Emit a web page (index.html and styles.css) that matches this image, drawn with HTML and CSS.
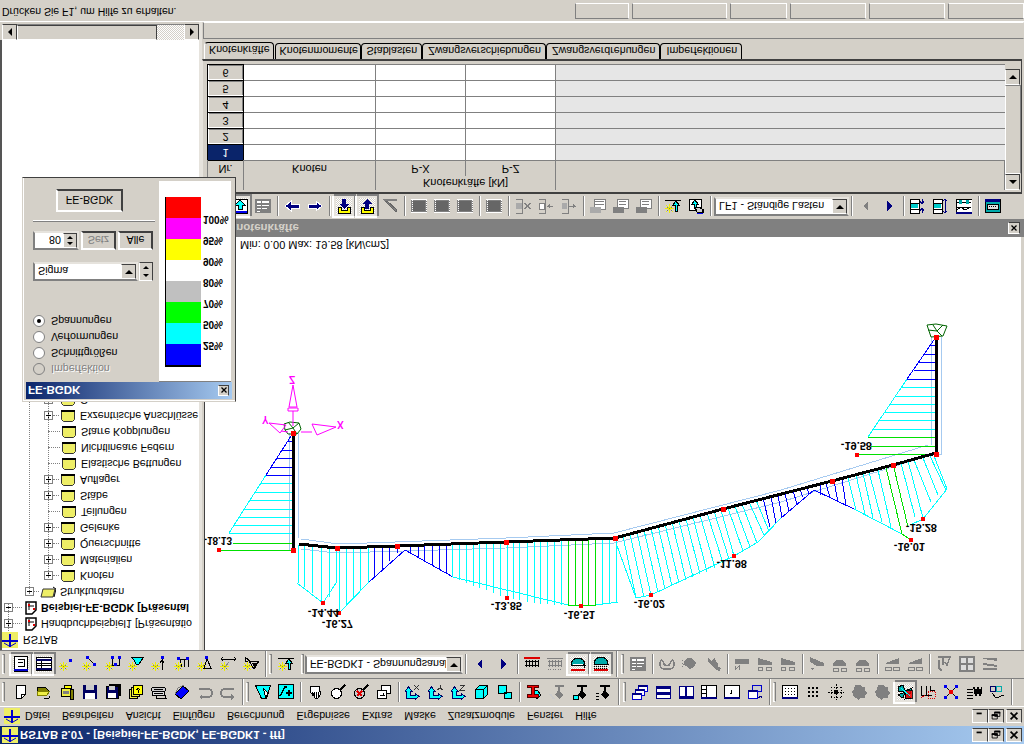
FILE: index.html
```html
<!DOCTYPE html>
<html lang="de">
<head>
    <meta charset="UTF-8">
    <title>RSTAB 5.07</title>
    <link rel="stylesheet" href="styles.css">
</head>
<body>
<svg class="defs">
    <symbol id="logo" viewBox="0 0 16 16"><path d="M0 0h16v16H0z" fill="#eeee66"/><path d="M0 8h16v2H0zM7 2h2v13H7z" fill="#00c"/><path d="M2 11l5 3M14 11l-5 3" stroke="#00c" fill="none"/></symbol>
    <symbol id="folder" viewBox="0 0 16 16"><path d="M1.500 2.500h13v9l-2 2h-9l-2-2z" fill="#eeee66" stroke="#333"/><path d="M1 3h14" stroke="#000" stroke-width="2"/></symbol>
    <symbol id="folderopen" viewBox="0 0 16 16"><path d="M3 5h12l-2 8H1z" fill="#eeee66" stroke="#333"/><path d="M13 3l3 2-2 8" fill="none" stroke="#000"/></symbol>
    <symbol id="project" viewBox="0 0 16 16"><path d="M3 2h10v8l-4 4H3z" fill="#fff" stroke="#000" stroke-width="1.5"/><path d="M5 6h6M6 3v7" stroke="#000"/><path d="M5 4h2v2H5zM10 8h2v2h-2z" fill="#d00"/></symbol>
    <symbol id="new" viewBox="0 0 16 16"><path d="M3.5 1.5h9v9l-4 4h-5z" fill="#fff" stroke="#000"/><path d="M8.5 14v-3.5h4" fill="none" stroke="#000"/></symbol>
    <symbol id="open" viewBox="0 0 16 16"><path d="M1.5 3.5h8l4 4h-12z" fill="#808000" stroke="#000"/><path d="M1.5 7.5h12l-3 4h-9z" fill="#eeee44" stroke="#808000"/><path d="M8 14h5l1-2" fill="none" stroke="#000"/></symbol>
    <symbol id="props" viewBox="0 0 16 16"><path d="M5.5 1.5h7v3h-7z" fill="#ff0" stroke="#000"/><path d="M2.5 4.5h9v8h-9z" fill="#eeee44" stroke="#000"/><path d="M4 7h6v3H4z" fill="#808080"/><path d="M11.5 5.5h3v10h-3z" fill="#808000" stroke="#000"/></symbol>
    <symbol id="save" viewBox="0 0 16 16"><path d="M1 1h14v14H1z" fill="#000060"/><path d="M4 1h8v5H4z" fill="#ccc"/><path d="M3 9h10v6H3z" fill="#fff"/></symbol>
    <symbol id="saveall" viewBox="0 0 16 16"><path d="M4 0h12v12H4z" fill="#000"/><path d="M1 2h12v12H1z" fill="#000060" stroke="#000"/><path d="M4 2h6v4H4z" fill="#ccc"/><path d="M3 9h8v5H3z" fill="#fff"/></symbol>
    <symbol id="stackup" viewBox="0 0 16 16"><path d="M1.5 5.5h8v9h-8z" fill="#eeee44" stroke="#000"/><path d="M3.5 3.5h8v9h-8z" fill="#eeee44" stroke="#000"/><path d="M5.5 1.5h9v9h-9z" fill="#ff0" stroke="#000"/><path d="M10 3l-2 3h4zM9.500 5h1v4h-1z" fill="#000"/></symbol>
    <symbol id="print" viewBox="0 0 16 16"><path d="M2.500 3.500h10a2 2 0 0 1 0 4h-10a2 2 0 0 1 0-4z" fill="#ccc" stroke="#000"/><path d="M1.500 7.500h12v4h-12z" fill="#ddd" stroke="#000"/><path d="M5 11.500h9l1 3H6zM3 5.500h9M3 9.500h9" fill="none" stroke="#000"/></symbol>
    <symbol id="book" viewBox="0 0 16 16"><path d="M1 10l8-8 6 5-8 8z" fill="#00f" stroke="#000"/><path d="M1 10l3-6 6-3" fill="none" stroke="#808080"/></symbol>
    <symbol id="undo" viewBox="0 0 16 16"><path d="M2 5h9a3.500 3.500 0 0 1 0 8H5" fill="none" stroke="#808080" stroke-width="2"/><path d="M2 13l3-3v6z" fill="#808080"/></symbol>
    <symbol id="redo" viewBox="0 0 16 16"><path d="M14 5H5a3.500 3.500 0 0 0 0 8h6" fill="none" stroke="#808080" stroke-width="2"/><path d="M14 13l-3-3v6z" fill="#808080"/></symbol>
    <symbol id="view1" viewBox="0 0 16 16"><path d="M.5 1.500h15l-4 13h-5z" fill="#0ff" stroke="#000"/><path d="M8 4l5 5-2 5z" fill="#fff" stroke="#000"/></symbol>
    <symbol id="view2" viewBox="0 0 16 16"><path d="M.5.500h15v14H.500z" fill="#0ff" stroke="#000"/><path d="M2 12l5-9h2M8 9h6M11 6v6" fill="none" stroke="#000" stroke-width="1.500"/></symbol>
    <symbol id="hand" viewBox="0 0 16 16"><path d="M3 2h9v5h1v4l-2 3H8L6 9H4L3 6z" fill="#fff" stroke="#000"/><path d="M5.500 8v4M7.500 8v6M9.500 8v6M11.500 8v5" stroke="#000"/></symbol>
    <symbol id="mag" viewBox="0 0 16 16"><circle cx="6.500" cy="9.500" r="5" fill="#fff" stroke="#000"/><path d="M10 6l5-5" stroke="#000" stroke-width="2"/></symbol>
    <symbol id="magx" viewBox="0 0 16 16"><circle cx="6.500" cy="9.500" r="5" fill="#ccc" stroke="#000"/><path d="M10 6l5-5" stroke="#000" stroke-width="2"/><path d="M4 7l5 5M9 7l-5 5" stroke="#d00" stroke-width="1.500"/></symbol>
    <symbol id="restore" viewBox="0 0 16 16"><path d="M5.500 1.500h9v8h-9z" fill="#fff" stroke="#000"/><path d="M1.500 6.500h9v8h-9z" fill="#fff" stroke="#000"/><path d="M4 11h4l-1-2" fill="none" stroke="#000"/></symbol>
    <symbol id="axx" viewBox="0 0 16 16"><path d="M1.500 14.500V7H0l3.500-4L7 7H5.500v4H10V9l4 3.500-4 3v-1z" fill="#0ff" stroke="#006"/><path d="M9 1l5 5M14 1L9 6" stroke="#333" fill="none"/></symbol>
    <symbol id="axy" viewBox="0 0 16 16"><path d="M1.500 14.500V7H0l3.500-4L7 7H5.500v4H10V9l4 3.500-4 3v-1z" fill="#0ff" stroke="#006"/><path d="M9 6l3-2 3 2M12 4V1" stroke="#333" fill="none"/></symbol>
    <symbol id="axz" viewBox="0 0 16 16"><path d="M1.500 14.500V7H0l3.500-4L7 7H5.500v4H10V9l4 3.500-4 3v-1z" fill="#0ff" stroke="#006"/><path d="M9 1h5L9 6h5" stroke="#333" fill="none"/></symbol>
    <symbol id="cube" viewBox="0 0 16 16"><path d="M1.500 5.500l4-4h8v9l-4 4h-8z" fill="#0ff" stroke="#000"/><path d="M1.500 5.500h8v9M9.500 5.500l4-4" fill="none" stroke="#000"/></symbol>
    <symbol id="cubes" viewBox="0 0 16 16"><path d="M1.500 1.500h8v8h-8zM7.500 8.500h7v6h-7z" fill="#0ff" stroke="#000"/></symbol>
    <symbol id="ibeam" viewBox="0 0 16 16"><path d="M5 7l6-1 4 5-4 4z" fill="#0ff" stroke="#000"/><path d="M1 1h11v2H8v7h4v3H1v-3h4V3H1z" fill="#e00" stroke="#500"/></symbol>
    <symbol id="tgrey" viewBox="0 0 16 16"><path d="M6 1h9v2h-4v5l3 3-4 4-4-5 2-2 1-2V3H6z" fill="#808080"/><path d="M1 10l4 5" stroke="#ccc" stroke-width="2"/></symbol>
    <symbol id="tblack" viewBox="0 0 16 16"><path d="M5 1h10v2h-4v5l3 3-4 4-4-5 2-2 1-2V3H5z" fill="#000"/><path d="M1 11h5v4H1z" fill="#0ff" stroke="#000"/></symbol>
    <symbol id="tblack2" viewBox="0 0 16 16"><path d="M5 1h10v2h-4v5l3 3-4 4-4-5 2-2 1-2V3H5z" fill="#000"/><path d="M1 9h3M1 12h3M1 15h3" stroke="#000"/></symbol>
    <symbol id="wcas" viewBox="0 0 16 16"><path d="M6 1h9v6H6z" fill="#fff" stroke="#00c"/><path d="M3 5h9v6H3z" fill="#fff" stroke="#00c"/><path d="M0 9h9v6H0z" fill="#fff" stroke="#00c"/><path d="M6 1h9v2H6zM3 5h9v2H3zM0 9h9v2H0z" fill="#000080"/></symbol>
    <symbol id="wh" viewBox="0 0 16 16"><path d="M1 2h14v12H1z" fill="#fff" stroke="#000080"/><path d="M1 2h14v3H1zM1 8h14v3H1z" fill="#000080"/></symbol>
    <symbol id="wv" viewBox="0 0 16 16"><path d="M1 2h14v12H1z" fill="#fff" stroke="#000080"/><path d="M8 2v10" stroke="#000080" stroke-width="2"/><path d="M1 12h14v2H1z" fill="#000080"/></symbol>
    <symbol id="wtree" viewBox="0 0 16 16"><path d="M.5 1.500h15v13H.5z" fill="#fff" stroke="#000"/><path d="M5.500 1.500v11M.5 5.500h5M.5 9.500h5" stroke="#000"/><path d="M0 13h16v2H0z" fill="#000080"/></symbol>
    <symbol id="wdlg" viewBox="0 0 16 16"><path d="M.5 1.500h15v13H.5z" fill="#fff" stroke="#000"/><path d="M7.500 6v4M6 9.500h2" stroke="#000"/><path d="M0 13h16v2H0z" fill="#000080"/></symbol>
    <symbol id="warrow" viewBox="0 0 16 16"><path d="M5 1h9v6H5z" fill="#ccc" stroke="#00c"/><path d="M1 6h9v8H1z" fill="#fff" stroke="#00c"/><path d="M1 6h9v2H1z" fill="#000080"/><path d="M11 14l3-2M14 14v-2h-2" stroke="#000080" fill="none"/></symbol>
    <symbol id="griddots" viewBox="0 0 16 16"><path d="M.5 1.500h15v13H.5z" fill="#fff" stroke="#000"/><path d="M0 13h16v2H0z" fill="#000080"/><path d="M3 4h1v1H3zM6 4h1v1H6zM9 4h1v1H9zM12 4h1v1h-1zM3 7h1v1H3zM6 7h1v1H6zM9 7h1v1H9zM12 7h1v1h-1zM3 10h1v1H3zM6 10h1v1H6zM9 10h1v1H9zM12 10h1v1h-1z"/></symbol>
    <symbol id="dots" viewBox="0 0 16 16"><path d="M3 3h2v2H3zM7 3h2v2H7zM11 3h2v2h-2zM3 7h2v2H3zM7 7h2v2H7zM11 7h2v2h-2zM3 11h2v2H3zM7 11h2v2H7zM11 11h2v2h-2z"/></symbol>
    <symbol id="cross" viewBox="0 0 16 16"><path d="M0 8h16M8 0v16" stroke="#000" stroke-dasharray="2 1"/><path d="M3 3v10M13 3v10M3 3h10M3 13h10" stroke="#000" stroke-dasharray="1 2"/><path d="M6 6h4v4H6z"/></symbol>
    <symbol id="gear" viewBox="0 0 16 16"><path d="M4 1h5l2 2h3v4l2 2-2 2v3H9l-2 2-2-2-2-1-1-3-2-2 3-3z" fill="#808080"/></symbol>
    <symbol id="flower" viewBox="0 0 16 16"><path d="M1 3l5-2 2 6-6 1zM8 7l7-3-2 6zM8 8l-2 6-5-3zM9 8l5 6-6 1z" fill="#0aa" stroke="#000"/><path d="M8 6h7v8H8z" fill="#e00" stroke="#000" opacity=".85"/><path d="M4 4l9 8" stroke="#0ff"/></symbol>
    <symbol id="reddots" viewBox="0 0 16 16"><path d="M1 2v9h11M6 2v9M10 2v4h5" fill="none" stroke="#000"/><path d="M1 14l4-3M8 7h7v7H8z" fill="none" stroke="#d00" stroke-dasharray="1 1"/></symbol>
    <symbol id="xblue" viewBox="0 0 16 16"><path d="M2 2l12 12M14 2L2 14" stroke="#000"/><path d="M1 1h3v3H1zM12 1h3v3h-3zM1 12h3v3H1zM12 12h3v3h-3z" fill="#00e"/><path d="M6 6h4v4H6z" fill="#e00"/></symbol>
    <symbol id="chartb" viewBox="0 0 16 16"><path d="M1 5h6M1 8h6M1 11h6M1 14h6" stroke="#000"/><path d="M8 3l2 9 2-9 2 9 2-9" fill="none" stroke="#000" stroke-width="2"/></symbol>
    <symbol id="glasses" viewBox="0 0 16 16"><circle cx="4" cy="5" r="3" fill="none" stroke="#006"/><circle cx="10" cy="5" r="3" fill="none" stroke="#0aa"/><path d="M3 9l4 5 8-3" fill="none" stroke="#000"/></symbol>
    <symbol id="listbox" viewBox="0 0 16 16"><path d="M1.500.5h13v15h-13z" fill="#fff" stroke="#000"/><path d="M5 3h6v7H5M5 6h5M5 10h3" fill="none" stroke="#000"/><path d="M1 13h14v2H1z" fill="#00c"/></symbol>
    <symbol id="tablebox" viewBox="0 0 16 16"><path d="M.5 1.500h15v13H.5z" fill="#fff" stroke="#000"/><path d="M0 3h16v2H0zM0 12h16v2H0z" fill="#000060"/><path d="M1 7h14M1 9.500h14M5.500 5v7" stroke="#000"/></symbol>
    <symbol id="star" viewBox="0 0 16 16"><path d="M1 7l7 7M8 7l-7 7M4.500 6v9M0 10.500h9" stroke="#f0f000" stroke-width="1.400" fill="none"/><path d="M2 9h1v1H2zM6 9h1v1H6zM2 12h1v1H2zM6 12h1v1H6zM4 10h1v1H4z" fill="#777"/></symbol>
    <symbol id="n1" viewBox="0 0 16 16"><use href="#star"/><path d="M10 3h3v3h-3z" fill="#00e"/></symbol>
    <symbol id="n2" viewBox="0 0 16 16"><use href="#star"/><path d="M5 1l8 8" stroke="#000"/><path d="M4 0h3v3H4zM11 7h3v3h-3z" fill="#00e"/></symbol>
    <symbol id="n3" viewBox="0 0 16 16"><use href="#star"/><path d="M7 2v7h7V2" fill="none" stroke="#000"/><path d="M6 0h3v3H6zM13 0h3v3h-3z" fill="#00e"/><path d="M9 7h3v3H9z" fill="#00e"/></symbol>
    <symbol id="n4" viewBox="0 0 16 16"><use href="#star"/><path d="M3 1h13l-3 4-2 3H8L6 4z" fill="#0ff" stroke="#000"/></symbol>
    <symbol id="n5" viewBox="0 0 16 16"><use href="#star"/><path d="M11 3v11M9 7l2-3 2 3" fill="none" stroke="#000"/><path d="M10 0h3v3h-3z" fill="#00e"/></symbol>
    <symbol id="n6" viewBox="0 0 16 16"><use href="#star"/><path d="M5 3h9M6 3v4M10 3v8M14 3v8M7 8v3" fill="none" stroke="#000"/><path d="M3 1h3v3H3zM12 1h3v3h-3z" fill="#00e"/></symbol>
    <symbol id="n7" viewBox="0 0 16 16"><use href="#star"/><path d="M10 3l-3 9h7z" fill="none" stroke="#000"/><path d="M8 0h3v3H8z" fill="#00e"/></symbol>
    <symbol id="n8" viewBox="0 0 16 16"><use href="#star"/><path d="M1 3h15M3 1L1 3l2 2M14 1l2 2-2 2" fill="none" stroke="#000"/><path d="M9 6L5 11" stroke="#888"/></symbol>
    <symbol id="n9" viewBox="0 0 16 16"><use href="#star"/><path d="M2 1v4h3M2 1l6 5M6 5h10l-5 8z" fill="none" stroke="#000"/><path d="M9 7h5l-2 5z"/></symbol>
    <symbol id="starup" viewBox="0 0 16 16"><use href="#star"/><path d="M0 2h16" stroke="#000"/><path d="M11 3l3 4h-2v6h-2V7H8z" fill="#0ff" stroke="#000"/></symbol>
    <symbol id="left" viewBox="0 0 16 16"><path d="M10 3L5 8l5 5z" fill="#000080"/></symbol>
    <symbol id="right" viewBox="0 0 16 16"><path d="M6 3l5 5-5 5z" fill="#000080"/></symbol>
    <symbol id="leftg" viewBox="0 0 16 16"><path d="M10 3L5 8l5 5z" fill="#808080"/></symbol>
    <symbol id="grid1" viewBox="0 0 16 16"><path d="M0 2h16" stroke="#d00" stroke-width="1.500"/><path d="M1 5h14M1 9h14M2 4v7M5 4v7M8 4v7M11 4v7M14 4v7" stroke="#000"/></symbol>
    <symbol id="grid2" viewBox="0 0 16 16"><path d="M0 2h16M1 5h14M1 9h14M2 4v7M5 4v7M8 4v7M11 4v7M14 4v7" stroke="#808080"/><path d="M1 13h3M6 13h3M11 13h3" stroke="#808080" stroke-dasharray="1 1"/></symbol>
    <symbol id="dome1" viewBox="0 0 16 16"><path d="M1 9a7 7 0 0 1 14 0z" fill="#0aa" stroke="#000"/><path d="M3 8h10" stroke="#fff"/><path d="M1 14h14" stroke="#d00" stroke-width="1.500"/><path d="M13 8l2 4" stroke="#000"/></symbol>
    <symbol id="dome2" viewBox="0 0 16 16"><path d="M1 8a7 7 0 0 1 14 0z" fill="#0aa" stroke="#000"/><path d="M1 10h14M1 12h14" stroke="#000" stroke-dasharray="1 1"/><path d="M1 14h14" stroke="#d00" stroke-width="1.500"/></symbol>
    <symbol id="sheet" viewBox="0 0 16 16"><path d="M0 1h16v14H0z" fill="#808080"/><path d="M2 3h4v2H2zM7 3h7v2H7zM2 7h4v1H2zM7 7h7v1H7zM2 10h4v1H2zM7 10h5v1H7zM2 13h3v1H2z" fill="#fff"/></symbol>
    <symbol id="gloop" viewBox="0 0 16 16"><path d="M1 8c0-6 3-4 4 0 1 2 5 2 6 0 1-4 4-6 4 0s-4 5-7 5-7 1-7-5z" fill="none" stroke="#808080" stroke-width="1.500"/></symbol>
    <symbol id="gblob" viewBox="0 0 16 16"><path d="M3 4c3-3 8-2 9 0l2 3-2 4-4 2-4-3-3-1z" fill="#808080"/><path d="M0 4h1M0 7h1M0 10h1" stroke="#808080"/></symbol>
    <symbol id="gman" viewBox="0 0 16 16"><path d="M3 2l3 3 4-4 1 5 2 2v3l3 1-1 3-4-1-3-3-3-3-2-2z" fill="#808080"/></symbol>
    <symbol id="gn" viewBox="0 0 16 16"><path d="M1 3h14v5H1z" fill="#808080"/><path d="M1 10v4l4-4v4" fill="none" stroke="#808080"/></symbol>
    <symbol id="gw1" viewBox="0 0 16 16"><path d="M1 2l14 4v3H1z" fill="#808080"/><path d="M1 11h4v3H1zM9 11h5v3H9z" fill="none" stroke="#808080"/></symbol>
    <symbol id="gw2" viewBox="0 0 16 16"><path d="M1 1l14 6v3H8L1 6z" fill="#808080"/><path d="M3 13h1M2 12h3" stroke="#808080"/></symbol>
    <symbol id="gw3" viewBox="0 0 16 16"><path d="M1 8c2-6 10-6 13 0v2H1z" fill="#808080"/><path d="M1 12h5v3H1zM9 12h5v3H9z" fill="none" stroke="#808080"/></symbol>
    <symbol id="gw4" viewBox="0 0 16 16"><path d="M2 7l13-5v6H2z" fill="#808080"/><path d="M1 11h6v3H1zM9 11h6v3H9z" fill="none" stroke="#808080"/></symbol>
    <symbol id="gt" viewBox="0 0 16 16"><path d="M2 1h13M7 1v8M14 1l-3 8-2-3M3 4v8l3 3" fill="none" stroke="#808080" stroke-width="1.500"/></symbol>
    <symbol id="gt2" viewBox="0 0 16 16"><path d="M1 1h14v14H1zM1 8h14M8 1v14" fill="#ddd" stroke="#808080" stroke-width="2"/></symbol>
    <symbol id="gt3" viewBox="0 0 16 16"><path d="M1 2h14v3L1 3zM1 7l14 2v2L1 9zM1 12h14v2H1z" fill="#808080"/></symbol>
    <symbol id="upbox" viewBox="0 0 16 16"><path d="M1 1h14v14H1z" fill="#fff" stroke="#000"/><path d="M8 2l5 5h-3v4H6V7H3z" fill="#0ff" stroke="#000"/><path d="M1 13h14v2H1z" fill="#00e"/></symbol>
    <symbol id="aleft" viewBox="0 0 16 16"><path d="M7 3L1 8l6 5v-3h8V6H7z" fill="#000080" stroke="#fff"/></symbol>
    <symbol id="aright" viewBox="0 0 16 16"><path d="M9 3l6 5-6 5v-3H1V6h8z" fill="#000080" stroke="#fff"/></symbol>
    <symbol id="ydown" viewBox="0 0 16 16"><path d="M2 9v6h12V9h-3v3H5V9z" fill="#ff0" stroke="#000"/><path d="M6 1h4v5h3l-5 5-5-5h3z" fill="#000080"/></symbol>
    <symbol id="yup" viewBox="0 0 16 16"><path d="M2 9v6h12V9h-3v3H5V9z" fill="#ff0" stroke="#000"/><path d="M8 1l5 5h-3v5H6V6H3z" fill="#000080"/></symbol>
    <symbol id="pencil" viewBox="0 0 16 16"><path d="M0 1h15v2H3z" fill="#808080"/><path d="M3 3l11 11 1-2L5 3z" fill="#808080" stroke="#666"/></symbol>
    <symbol id="frame" viewBox="0 0 16 16"><path d="M0 1h16v14H0z" fill="#808080"/><path d="M0 1h16v1H0zM0 14h16v1H0z" fill="#fff" stroke-dasharray="1 1"/><path d="M2 3h12v10H2z" fill="#666"/><path d="M1 2v12M15 2v12" stroke="#fff" stroke-dasharray="1 1"/></symbol>
    <symbol id="rowx" viewBox="0 0 16 16"><path d="M1 1h7M1 15h7M7 1v14" fill="none" stroke="#808080"/><path d="M1 5h6v6H1z" fill="#aaa"/><path d="M10 5l5 6M15 5l-5 6" stroke="#808080" stroke-width="1.500"/></symbol>
    <symbol id="rowl" viewBox="0 0 16 16"><path d="M1 1h7M1 15h7M7 1v14M9 8h6" fill="none" stroke="#808080"/><path d="M1 5h5v6H1z" fill="#fff" stroke="#808080"/><path d="M9 8l3-2v4z" fill="#808080"/></symbol>
    <symbol id="rowr" viewBox="0 0 16 16"><path d="M1 1h7M1 15h7M7 1v14M7 8h8" fill="none" stroke="#808080"/><path d="M1 5h5v6H1z" fill="#aaa"/><path d="M15 8l-3-2v4z" fill="#808080"/></symbol>
    <symbol id="pgrid" viewBox="0 0 16 16"><path d="M4 1h11v10H4z" fill="#fff" stroke="#808080"/><path d="M5 3h9M5 6h9" stroke="#808080"/><path d="M0 9h11v6H0z" fill="#aaa"/></symbol>
    <symbol id="pstack" viewBox="0 0 16 16"><path d="M4 1h11v9H4z" fill="#fff" stroke="#808080"/><path d="M6 3h7M6 6h7" stroke="#808080"/><path d="M0 9h11v6H0z" fill="#808080"/></symbol>
    <symbol id="handsel" viewBox="0 0 16 16"><path d="M1 1h12v11H1z" fill="#fff" stroke="#000"/><path d="M7 2l3 4H8v4H6V6H4z" fill="#0ff" stroke="#000"/><path d="M7 9l2 5h5v-3l-3-2zM15 11v4" fill="#ccc" stroke="#000"/><path d="M9 15h6" stroke="#00e"/></symbol>
    <symbol id="rows1" viewBox="0 0 16 16"><path d="M0 1h9v14H0z" fill="#fff" stroke="#000"/><path d="M0 5h9M0 11h9" stroke="#000"/><path d="M1 6h7v4H1z" fill="#0cc"/><path d="M12 1v5M10 3l2 3 2-3M12 15v-5M10 13l2-3 2 3" fill="none" stroke="#000080"/></symbol>
    <symbol id="rows2" viewBox="0 0 16 16"><path d="M0 1h9v14H0z" fill="#fff" stroke="#000"/><path d="M0 5h9M0 11h9" stroke="#000"/><path d="M1 6h7v4H1z" fill="#0cc"/><path d="M12 1v14M10 3l2-2 2 2M10 13l2 2 2-2" fill="none" stroke="#000080"/></symbol>
    <symbol id="chartw" viewBox="0 0 16 16"><path d="M0 1h16v13H0z" fill="#fff" stroke="#000"/><path d="M1 4h14M1 9h14" stroke="#000"/><path d="M3 2h3v4H3zM10 2h3v4h-3z" fill="#0aa"/><path d="M1 12l4-3 4 3 6-3" fill="none" stroke="#000"/><path d="M0 14h16v2H0z" fill="#000080"/></symbol>
    <symbol id="cyanwin" viewBox="0 0 16 16"><path d="M0 1h15v13H0z" fill="#0aa" stroke="#000"/><path d="M0 1h15v3H0z" fill="#000080"/><path d="M2 6h11v5H2z" fill="#ddd" stroke="#000"/><path d="M4 8h7" stroke="#000" stroke-dasharray="1 1"/></symbol>
    <symbol id="wmin" viewBox="0 0 16 14"><path d="M4 3h6v2H4z"/></symbol>
    <symbol id="wmax" viewBox="0 0 16 14"><path d="M6.500 2.500h6v5h-6zM3.500 5.500h6v5h-6z" fill="#d4d0c8" stroke="#000"/><path d="M6 2h7v2H6zM3 5h7v2H3z"/></symbol>
    <symbol id="wclose" viewBox="0 0 16 14"><path d="M4 3l8 8M12 3l-8 8" stroke="#000" stroke-width="2"/></symbol>
</svg>

<div class="app">
    <div class="titlebar">
        <svg class="tile flip"><use href="#logo"/></svg>
        <span class="title-text">RSTAB 5.07 - [Beispiel-FE-BGDK, FE-BGDK1 - fff]</span>
        <span class="winbtns">
            <span class="winbtn"><svg class="flip"><use href="#wmin"/></svg></span>
            <span class="winbtn"><svg class="flip"><use href="#wmax"/></svg></span>
            <span class="winbtn gapped"><svg class="flip"><use href="#wclose"/></svg></span>
        </span>
    </div>

    <div class="menubar">
        <svg class="tile flip"><use href="#logo"/></svg>
        <span class="menu-item">Datei</span>
        <span class="menu-item">Bearbeiten</span>
        <span class="menu-item">Ansicht</span>
        <span class="menu-item">Einfügen</span>
        <span class="menu-item">Berechnung</span>
        <span class="menu-item">Ergebnisse</span>
        <span class="menu-item">Extras</span>
        <span class="menu-item">Maske</span>
        <span class="menu-item">Zusatzmodule</span>
        <span class="menu-item">Fenster</span>
        <span class="menu-item">Hilfe</span>
        <span class="winbtns">
            <span class="winbtn"><svg class="flip"><use href="#wmin"/></svg></span>
            <span class="winbtn"><svg class="flip"><use href="#wmax"/></svg></span>
            <span class="winbtn gapped"><svg class="flip"><use href="#wclose"/></svg></span>
        </span>
    </div>

    <div class="toolbar">
        <i class="grip first"></i>
        <svg class="ico"><use href="#new"/></svg>
        <svg class="ico"><use href="#open"/></svg>
        <svg class="ico"><use href="#props"/></svg>
        <svg class="ico"><use href="#save"/></svg>
        <svg class="ico"><use href="#saveall"/></svg>
        <svg class="ico"><use href="#stackup"/></svg>
        <svg class="ico"><use href="#print"/></svg>
        <svg class="ico"><use href="#book"/></svg>
        <svg class="ico"><use href="#undo"/></svg>
        <svg class="ico"><use href="#redo"/></svg>
        <i class="tbend"></i><i class="grip"></i>
        <svg class="ico"><use href="#view1"/></svg>
        <svg class="ico"><use href="#view2"/></svg>
        <i class="sep"></i>
        <svg class="ico"><use href="#hand"/></svg>
        <svg class="ico"><use href="#mag"/></svg>
        <svg class="ico"><use href="#magx"/></svg>
        <svg class="ico"><use href="#restore"/></svg>
        <i class="sep"></i>
        <svg class="ico"><use href="#axx"/></svg>
        <svg class="ico"><use href="#axy"/></svg>
        <svg class="ico"><use href="#axz"/></svg>
        <svg class="ico"><use href="#cube"/></svg>
        <svg class="ico"><use href="#cubes"/></svg>
        <i class="sep"></i>
        <svg class="ico"><use href="#ibeam"/></svg>
        <svg class="ico"><use href="#tgrey"/></svg>
        <svg class="ico"><use href="#tblack"/></svg>
        <svg class="ico"><use href="#tblack2"/></svg>
        <i class="tbend wide"></i><i class="grip"></i>
        <svg class="ico"><use href="#wcas"/></svg>
        <svg class="ico"><use href="#wh"/></svg>
        <svg class="ico"><use href="#wv"/></svg>
        <svg class="ico"><use href="#wtree"/></svg>
        <svg class="ico"><use href="#wdlg"/></svg>
        <svg class="ico"><use href="#warrow"/></svg>
        <i class="tbend"></i><i class="grip"></i>
        <svg class="ico"><use href="#griddots"/></svg>
        <svg class="ico"><use href="#dots"/></svg>
        <svg class="ico"><use href="#cross"/></svg>
        <svg class="ico"><use href="#gear"/></svg>
        <svg class="ico"><use href="#gear"/></svg>
        <svg class="ico on"><use href="#flower"/></svg>
        <svg class="ico"><use href="#reddots"/></svg>
        <svg class="ico"><use href="#xblue"/></svg>
        <svg class="ico"><use href="#chartb"/></svg>
        <svg class="ico"><use href="#glasses"/></svg>
        <i class="tbend"></i>
    </div>

    <div class="toolbar">
        <i class="grip first"></i>
        <svg class="ico on"><use href="#listbox"/></svg>
        <svg class="ico on"><use href="#tablebox"/></svg>
        <svg class="ico"><use href="#n1"/></svg>
        <svg class="ico"><use href="#n2"/></svg>
        <svg class="ico"><use href="#n3"/></svg>
        <svg class="ico"><use href="#n4"/></svg>
        <svg class="ico"><use href="#n5"/></svg>
        <svg class="ico"><use href="#n6"/></svg>
        <svg class="ico"><use href="#n7"/></svg>
        <svg class="ico"><use href="#n8"/></svg>
        <svg class="ico"><use href="#n9"/></svg>
        <i class="tbend"></i><i class="grip"></i>
        <svg class="ico"><use href="#starup"/></svg>
        <i class="grip solo"></i>
        <div class="combo result-combo"><span class="combo-text">FE-BGDK1 - Spannungsanal</span><i class="combo-btn"></i></div>
        <i class="sep"></i>
        <svg class="ico"><use href="#left"/></svg>
        <svg class="ico"><use href="#right"/></svg>
        <i class="sep"></i>
        <svg class="ico"><use href="#grid1"/></svg>
        <svg class="ico"><use href="#grid2"/></svg>
        <svg class="ico on"><use href="#dome1"/></svg>
        <svg class="ico on"><use href="#dome2"/></svg>
        <i class="tbend wide"></i><i class="grip"></i>
        <svg class="ico"><use href="#sheet"/></svg>
        <i class="sep"></i>
        <svg class="ico"><use href="#gloop"/></svg>
        <svg class="ico"><use href="#gblob"/></svg>
        <svg class="ico"><use href="#gman"/></svg>
        <i class="sep"></i>
        <svg class="ico"><use href="#gn"/></svg>
        <svg class="ico"><use href="#gw1"/></svg>
        <svg class="ico"><use href="#gw1"/></svg>
        <i class="sep"></i>
        <svg class="ico"><use href="#gw2"/></svg>
        <svg class="ico"><use href="#gw3"/></svg>
        <svg class="ico"><use href="#gw3"/></svg>
        <i class="sep"></i>
        <svg class="ico"><use href="#gw4"/></svg>
        <svg class="ico"><use href="#gw4"/></svg>
        <i class="sep"></i>
        <svg class="ico"><use href="#gt"/></svg>
        <svg class="ico"><use href="#gt2"/></svg>
        <svg class="ico"><use href="#gt3"/></svg>
    </div>

    <div class="main">
        <div class="sidebar">
            <div class="tree">
                <i class="vline v0"></i><i class="vline v1"></i><i class="vline v2"></i>
                <div class="node"><svg class="node-icon logo-icon flip"><use href="#logo"/></svg><span>RSTAB</span></div>
                <div class="node l1"><i class="box plus"></i><i class="stub"></i><svg class="node-icon flip"><use href="#project"/></svg><span>Handbuchbeispiel1 [Präsentatio</span></div>
                <div class="node l1"><i class="box"></i><i class="stub"></i><svg class="node-icon flip"><use href="#project"/></svg><b>Beispiel-FE-BGDK [Präsental</b></div>
                <div class="node l2"><i class="box"></i><i class="stub"></i><svg class="node-icon flip"><use href="#folderopen"/></svg><span>Strukturdaten</span></div>
                <div class="node l3"><i class="box plus"></i><i class="stub"></i><svg class="node-icon flip"><use href="#folder"/></svg><span>Knoten</span></div>
                <div class="node l3"><i class="box plus"></i><i class="stub"></i><svg class="node-icon flip"><use href="#folder"/></svg><span>Materialien</span></div>
                <div class="node l3"><i class="box plus"></i><i class="stub"></i><svg class="node-icon flip"><use href="#folder"/></svg><span>Querschnitte</span></div>
                <div class="node l3"><i class="box plus"></i><i class="stub"></i><svg class="node-icon flip"><use href="#folder"/></svg><span>Gelenke</span></div>
                <div class="node l3 leaf"><i class="stub"></i><svg class="node-icon flip"><use href="#folder"/></svg><span>Teilungen</span></div>
                <div class="node l3"><i class="box plus"></i><i class="stub"></i><svg class="node-icon flip"><use href="#folder"/></svg><span>Stäbe</span></div>
                <div class="node l3"><i class="box plus"></i><i class="stub"></i><svg class="node-icon flip"><use href="#folder"/></svg><span>Auflager</span></div>
                <div class="node l3 leaf"><i class="stub"></i><svg class="node-icon flip"><use href="#folder"/></svg><span>Elastische Bettungen</span></div>
                <div class="node l3 leaf"><i class="stub"></i><svg class="node-icon flip"><use href="#folder"/></svg><span>Nichtlineare Federn</span></div>
                <div class="node l3 leaf"><i class="stub"></i><svg class="node-icon flip"><use href="#folder"/></svg><span>Starre Kopplungen</span></div>
                <div class="node l3"><i class="box plus"></i><i class="stub"></i><svg class="node-icon flip"><use href="#folder"/></svg><span>Exzentrische Anschlüsse</span></div>
                <div class="node l3"><i class="box plus"></i><i class="stub"></i><svg class="node-icon flip"><use href="#folder"/></svg><span>Gruppen</span></div>
            </div>
            <div class="hscroll">
                <span class="sbtn"><i class="tri tri-left"></i></span>
                <span class="sthumb"></span>
                <span class="strack"></span>
                <span class="sbtn"><i class="tri tri-right"></i></span>
            </div>
        </div>

        <div class="content">
            <div class="canvas">
                <svg class="flip diagram" viewBox="204 237 817 413">
                    <text class="info" transform="translate(239,241) scale(1,-1)">Min: 0.00 Max: 19.58 [kN/cm2]</text>

                    <!-- offset outline of the frame -->
                    <g class="l-offset">
                        <path d="M288 433V550M297 433V538M930 337V445M940 337V454H933"/>
                        <path d="M300 539L338 544L505 538L613 533L780 490L927 445"/>
                        <path d="M300 549L335 553L505 548L613 543L780 502L933 454"/>
                    </g>

                    <!-- result hatching -->
                    <path class="l-blue" d="M292 433L265 475M287 441H292M281 450H292M276 458H292M270 467H292M265 475H292
                        M368 582L404 550L452 577M373 547V577M381 547V569M388 547V561M396 547V553M409 546V553M417 546V557M423 546V561M431 545V565M438 545V569M445 545V573
                        M780 518L813 490L853 509M762 498L769 527M770 497L775 523M777 495L781 517M784 493L788 511M792 491L796 504M799 490L802 497M806 488L808 494M819 485L820 495M825 483L829 498M833 481L837 502M841 479L845 505
                        M935 337L906 379M930 345H935M923 354H935M918 362H935M913 370H935M906 379H935"/>
                    <path class="l-cyan" d="M265 475L228 533M260 483H292M254 492H292M249 500H292M243 509H292M238 517H292M233 525H292M228 533H292
                        M297 545V583M303 545V587M311 546V593M320 547V602M328 547V597M335 548V583M296 583L322 603L335 583
                        M338 613L368 582M338 548V613M345 548V606M352 548V599M359 548V591M367 548V583
                        M452 577L567 605M595 605L617 602M451 544V577M458 544V580M465 544V583M472 544V586M478 544V588M485 543V590M492 543V593M499 543V596
                        M506 542V597M512 542V599M518 542V600M526 542V602M533 541V603M539 541V604M546 541V604M553 541V605M560 540V605M601 539V604M608 539V603M615 538V602
                        M615 543L635 598L650 595L733 556L757 542L780 518
                        M622 536L635 598M629 534L643 597M636 532L650 595M643 530L657 592M650 528L664 589M657 526L671 586M664 524L678 583M671 522L685 580M678 521L692 577M685 519L699 574M692 517L706 572M699 515L714 568M706 513L722 563M713 511L728 559M720 510L733 556M727 508L742 551M734 506L749 547M741 504L756 543M748 502L763 535M755 500L768 531
                        M853 509L901 534M847 478L855 510M855 475L864 514M862 473L872 518M868 472L881 522M877 470L890 527
                        M922 519L946 489L933 456M909 525L922 519M900 463L914 517M907 461L922 518M913 460L930 502M922 458L937 495M929 456L945 490
                        M906 379L867 437M901 387H935M895 396H935M889 404H935M884 412H935M879 420H935M872 429H935"/>
                    <path class="l-green" d="M232 543H292M218 550H292
                        M567 605H595M567 540V605M574 540V606M581 540V606M587 539V606M594 539V605
                        M901 534L910 540M885 468L901 534M893 468L907 527
                        M867 437H935M870 446H935M856 454H935"/>

                    <!-- frame -->
                    <path class="l-frame" d="M292 433V550M298 544L336 548L396 546L505 542L614 538L722 509L831 481L892 465L935 453V337"/>

                    <!-- supports -->
                    <path class="l-support" d="M283 424L289 422L298 423L300 429L296 434H287L284 430ZM287 422L292 428L298 423M284 430L292 428L296 434"/>
                    <path class="l-support" d="M926 325L935 324L946 326L942 336L930 337ZM932 325L936 331L942 325M927 330L936 331L941 336"/>

                    <!-- axes -->
                    <g class="l-axis">
                        <path d="M292 385L288 407H296ZM287 408H297V411H287ZM292 411V426"/>
                        <path d="M300 432H311M311 424L335 427L316 435Z"/>
                        <path d="M268 423L285 425L279 433ZM280 431L287 432"/>
                    </g>
                    <text class="axis-label" transform="translate(288,376) scale(1,-1)">Z</text>
                    <text class="axis-label" transform="translate(336,421) scale(1,-1)">X</text>
                    <text class="axis-label" transform="translate(261,416) scale(1,-1)">Y</text>

                    <!-- nodes -->
                    <path class="l-node" d="M290 431h5v5h-5zM290 548h5v5h-5zM334 546h5v5h-5zM394 544h5v5h-5zM503 540h5v5h-5zM612 536h5v5h-5zM720 507h5v5h-5zM829 479h5v5h-5zM890 463h5v5h-5zM933 452h5v5h-5zM933 335h5v5h-5z
                        M216 548h4v4h-4zM320 601h4v4h-4zM336 611h4v4h-4zM504 596h4v4h-4zM578 604h4v4h-4zM648 593h4v4h-4zM731 554h4v4h-4zM854 453h4v4h-4zM908 538h4v4h-4zM920 517h4v4h-4z"/>

                    <text class="val tight" transform="translate(231,537) scale(1,-1)">-18.13</text>
                    <text class="val" transform="translate(338,609) scale(1,-1)">-14.44</text>
                    <text class="val" transform="translate(352,620) scale(1,-1)">-16.27</text>
                    <text class="val" transform="translate(521,602) scale(1,-1)">-13.85</text>
                    <text class="val" transform="translate(594,611) scale(1,-1)">-16.51</text>
                    <text class="val" transform="translate(664,600) scale(1,-1)">-16.02</text>
                    <text class="val" transform="translate(746,560) scale(1,-1)">-11.98</text>
                    <text class="val" transform="translate(871,442) scale(1,-1)">-19.58</text>
                    <text class="val" transform="translate(936,524) scale(1,-1)">-15.28</text>
                    <text class="val" transform="translate(924,543) scale(1,-1)">-16.01</text>
                </svg>
            </div>

            <div class="panel-title">
                <span>Knotenkräfte</span>
                <span class="winbtn small"><svg class="flip"><use href="#wclose"/></svg></span>
            </div>

            <div class="toolbar panel-tools">
                <svg class="ico on"><use href="#upbox"/></svg>
                <svg class="ico"><use href="#sheet"/></svg>
                <i class="sep"></i>
                <svg class="ico"><use href="#aleft"/></svg>
                <svg class="ico"><use href="#aright"/></svg>
                <i class="sep"></i>
                <svg class="ico on"><use href="#ydown"/></svg>
                <svg class="ico on"><use href="#yup"/></svg>
                <svg class="ico"><use href="#pencil"/></svg>
                <i class="sep"></i>
                <svg class="ico"><use href="#frame"/></svg>
                <svg class="ico"><use href="#frame"/></svg>
                <svg class="ico"><use href="#frame"/></svg>
                <i class="sep"></i>
                <svg class="ico"><use href="#frame"/></svg>
                <i class="sep"></i>
                <svg class="ico"><use href="#rowx"/></svg>
                <svg class="ico"><use href="#rowl"/></svg>
                <svg class="ico"><use href="#rowr"/></svg>
                <i class="sep"></i>
                <svg class="ico"><use href="#pgrid"/></svg>
                <svg class="ico"><use href="#pstack"/></svg>
                <svg class="ico"><use href="#pstack"/></svg>
                <i class="sep"></i>
                <svg class="ico"><use href="#starup"/></svg>
                <svg class="ico"><use href="#handsel"/></svg>
                <i class="sep"></i>
                <div class="combo load-combo"><span class="combo-text">LF1 - Ständige Lasten</span><i class="combo-btn"></i></div>
                <i class="sep"></i>
                <svg class="ico"><use href="#leftg"/></svg>
                <svg class="ico"><use href="#right"/></svg>
                <i class="sep"></i>
                <svg class="ico"><use href="#rows1"/></svg>
                <svg class="ico"><use href="#rows2"/></svg>
                <svg class="ico"><use href="#chartw"/></svg>
                <i class="sep"></i>
                <svg class="ico"><use href="#cyanwin"/></svg>
            </div>

            <div class="sheet">
                <table class="grid">
                    <colgroup><col class="c-nr"><col class="c-kn"><col class="c-p"><col class="c-p"><col></colgroup>
                    <thead>
                        <tr class="head-top"><th></th><th></th><th colspan="2">Knotenkräfte [kN]</th><th></th></tr>
                        <tr class="head-sub"><th>Nr.</th><th>Knoten</th><th class="split">P-X</th><th class="split">P-Z</th><th></th></tr>
                    </thead>
                    <tbody>
                        <tr class="current"><th>1</th><td></td><td></td><td></td><td class="off"></td></tr>
                        <tr><th>2</th><td></td><td></td><td></td><td class="off"></td></tr>
                        <tr><th>3</th><td></td><td></td><td></td><td class="off"></td></tr>
                        <tr><th>4</th><td></td><td></td><td></td><td class="off"></td></tr>
                        <tr><th>5</th><td></td><td></td><td></td><td class="off"></td></tr>
                        <tr><th>6</th><td></td><td></td><td></td><td class="off"></td></tr>
                    </tbody>
                </table>
                <div class="vscroll">
                    <span class="sbtn"><i class="tri tri-up"></i></span>
                    <span class="vtrack"></span>
                    <span class="sbtn"><i class="tri tri-down"></i></span>
                </div>
            </div>

            <div class="tabs">
                <span class="tab active">Knotenkräfte</span>
                <span class="tab moment">Knotenmomente</span>
                <span class="tab">Stablasten</span>
                <span class="tab">Zwangsverschiebungen</span>
                <span class="tab">Zwangsverdrehungen</span>
                <span class="tab">Imperfektionen</span>
            </div>

            <div class="strip"></div>
        </div>
    </div>

    <div class="statusbar">
        <span class="status-msg">Drücken Sie F1, um Hilfe zu erhalten.</span>
        <span class="cell w54"></span>
        <span class="cell w95"></span>
        <span class="cell w57"></span>
        <span class="cell w76"></span>
        <span class="cell w76"></span>
        <span class="cell w76"></span>
    </div>

    <div class="palette">
        <div class="palette-title">
            <span>FE-BGDK</span>
            <span class="winbtn small"><svg class="flip"><use href="#wclose"/></svg></span>
        </div>
        <div class="palette-body">
            <div class="palette-controls">
                <label class="radio disabled"><i class="dot"></i>Imperfektion</label>
                <label class="radio"><i class="dot"></i>Schnittgrößen</label>
                <label class="radio"><i class="dot"></i>Verformungen</label>
                <label class="radio"><i class="dot checked"></i>Spannungen</label>

                <div class="sigma-row">
                    <div class="combo sigma-combo"><span class="combo-text">Sigma</span><i class="combo-btn"></i></div>
                    <span class="spin tall"><i class="tri tri-up"></i><i class="tri tri-down"></i></span>
                </div>

                <div class="set-row">
                    <div class="num-field"><span class="num">80</span><span class="spin"><i class="tri tri-up"></i><i class="tri tri-down"></i></span></div>
                    <button class="pbtn setz" disabled>Setz</button>
                    <button class="pbtn alle">Alle</button>
                </div>

                <hr class="rule">
                <button class="pbtn fe">FE-BGDK</button>
            </div>

            <div class="legend">
                <div class="bar">
                    <i class="band c-blue"></i><i class="band c-cyan"></i><i class="band c-green"></i><i class="band c-grey"></i>
                    <i class="band c-white"></i><i class="band c-yellow"></i><i class="band c-magenta"></i><i class="band c-red"></i>
                </div>
                <div class="marks">
                    <b>25%</b><b>50%</b><b>70%</b><b>80%</b><b>90%</b><b>95%</b><b>100%</b>
                </div>
            </div>
        </div>
    </div>
</div>
</body>
</html>
```

FILE: styles.css
```css
* { box-sizing: border-box; }
body { margin: 0; background: #d4d0c8; }
i { display: block; }

/* the whole window is shown upside down */
.app { position: relative; width: 1024px; height: 744px; overflow: hidden; display: flex; flex-direction: column; background: #d4d0c8; color: #000; font: 10.7px "Liberation Sans", Arial, sans-serif; transform: scaleY(-1); }
.flip { transform: scaleY(-1); }
.defs { position: absolute; width: 0; height: 0; }

/* title + menu */
.titlebar { flex: none; height: 18px; display: flex; align-items: center; padding-left: 2px; color: #fff; font-weight: bold; background: linear-gradient(90deg, #0a246a, #a6caf0); }
.tile { width: 16px; height: 16px; flex: none; }
.title-text { margin-left: 2px; font-size: 11.3px; }
.winbtns { margin-left: auto; margin-right: 2px; display: flex; }
.winbtn { display: block; width: 16px; height: 14px; background: #d4d0c8; border: 1px solid; border-color: #fff #404040 #404040 #fff; }
.winbtn svg { display: block; width: 14px; height: 12px; }
.winbtn.gapped { margin-left: 2px; }
.winbtn.small { width: 12px; height: 12px; }
.winbtn.small svg { width: 10px; height: 10px; }
.menubar { flex: none; height: 20px; display: flex; align-items: center; padding-left: 4px; border-bottom: 1px solid #fff; }
.menu-item { padding: 0 6px; }
.menu-item:first-of-type { margin-left: -1px; }

/* toolbars */
.toolbar { flex: none; height: 28px; display: flex; align-items: center; border-bottom: 1px solid #808080; }
.ico { flex: none; width: 16px; height: 16px; margin: 0 4px 0 3px; transform: scaleY(-1); shape-rendering: crispEdges; }
.ico.on { background: repeating-conic-gradient(#fff 0 25%, #d4d0c8 0 50%) 0 0 / 2px 2px; box-shadow: 0 0 0 2px #e6e3dd, 1px -1px 0 3px #808080, -1px 1px 0 3px #fff; }
.grip { flex: none; width: 3px; height: 20px; margin-right: 3px; border: 1px solid; border-color: #fff #808080 #808080 #fff; }
.grip.first { margin-left: 2px; margin-right: 5px; }
.grip.solo { margin: 0 1px 0 3px; }
.sep { flex: none; width: 2px; height: 20px; margin: 0 2px; border-left: 1px solid #808080; border-right: 1px solid #fff; }
.tbend { flex: none; width: 2px; height: 26px; margin: 0 2px; border-left: 1px solid #808080; border-right: 1px solid #fff; }
.tbend.wide { margin: 0 3px; }
.combo { flex: none; height: 19px; display: flex; align-items: center; background: #fff; border: 2px solid; border-color: #808080 #e6e3dd #e6e3dd #808080; }
.combo-text { flex: 1; padding-left: 3px; white-space: nowrap; overflow: hidden; }
.combo-btn { position: relative; width: 15px; height: 15px; background: #d4d0c8; border: 1px solid; border-color: #fff #404040 #404040 #fff; }
.combo-btn::after { content: ""; position: absolute; left: 3px; top: 4px; border: 4px solid transparent; border-top-color: #000; border-bottom: 0; }
.result-combo { width: 158px; }
.load-combo { width: 135px; }

/* left side: tree */
.main { flex: 1; min-height: 0; display: flex; }
.sidebar { flex: none; width: 202px; display: flex; flex-direction: column; border-right: 3px solid #e6e3dd; }
.tree { position: relative; height: 610px; overflow: hidden; padding-top: 2px; background: #fff; border-left: 2px solid #555; }
.node { height: 16px; display: flex; align-items: center; white-space: nowrap; }
.node-icon { flex: none; width: 16px; height: 16px; margin-right: 4px; }
.logo-icon { margin-left: 0; margin-right: 5px; }
.l1 { padding-left: 2px; }
.l1 .node-icon { margin-right: 2px; }
.l2 { padding-left: 23px; }
.l3 { padding-left: 42px; }
.l3.leaf { padding-left: 46px; }
.l3.leaf .stub { width: 12px; }
.box { flex: none; width: 9px; height: 9px; border: 1px solid #808080; background: linear-gradient(#000, #000) center / 5px 1px no-repeat, #fff; }
.box.plus { background: linear-gradient(#000, #000) center / 5px 1px no-repeat, linear-gradient(#000, #000) center / 1px 5px no-repeat, #fff; }
.stub { flex: none; width: 6px; height: 0; border-top: 1px dotted #808080; margin-right: 1px; }
.l1 .stub { width: 9px; }
.l2 .stub { width: 5px; }
.vline { position: absolute; width: 0; border-left: 1px dotted #808080; }
.v0 { left: 6px; top: 16px; height: 30px; }
.v1 { left: 27px; top: 56px; height: 200px; }
.v2 { left: 46px; top: 72px; height: 184px; }
.hscroll { display: flex; height: 16px; margin-left: 2px; border-bottom: 1px solid #808080; }
.sbtn { flex: none; display: flex; align-items: center; justify-content: center; width: 15px; height: 16px; background: #d4d0c8; border: 1px solid; border-color: #fff #404040 #404040 #fff; }
.sthumb { flex: none; width: 140px; background: #d4d0c8; border: 1px solid; border-color: #fff #404040 #404040 #fff; }
.strack { flex: 1; background: repeating-conic-gradient(#fff 0 25%, #d4d0c8 0 50%) 0 0 / 2px 2px; }
.tri { width: 0; height: 0; border: 4px solid transparent; }
.tri-left { border-left: 0; border-right-color: #000; }
.tri-right { border-right: 0; border-left-color: #000; }
.tri-up { border-top: 0; border-bottom-color: #000; }
.tri-down { border-bottom: 0; border-top-color: #000; }

/* right side */
.content { flex: 1; min-width: 0; display: flex; flex-direction: column; }
.canvas { flex: none; height: 413px; margin: 0 3px 0 2px; background: #fff; border-left: 1px solid #404040; overflow: hidden; }
.diagram { display: block; width: 817px; height: 413px; }
.diagram path { fill: none; shape-rendering: crispEdges; }
.diagram text { font-family: "Liberation Sans", Arial, sans-serif; font-size: 11px; }
.info { fill: #000; }
.l-offset path { stroke: #a6caf0; }
.diagram .l-blue { stroke: #0000ff; }
.diagram .l-cyan { stroke: #00ffff; }
.diagram .l-green { stroke: #00e000; }
.diagram .l-frame { stroke: #000; stroke-width: 3; }
.diagram .l-support { stroke: #006400; shape-rendering: auto; }
.l-axis path { stroke: #ff00ff; shape-rendering: auto; }
.diagram .l-node { fill: #ff0000; stroke: none; }
.diagram .val { font-weight: bold; text-anchor: end; fill: #000; }
.diagram .val.tight { font-size: 10px; }
.diagram .axis-label { font-weight: bold; fill: #ff00ff; font-size: 10px; }

.panel-title { flex: none; height: 18px; margin-left: 2px; display: flex; align-items: center; justify-content: space-between; padding: 0 4px 0 24px; background: #808080; color: #d4d0c8; font-weight: bold; font-size: 11.5px; }
.panel-tools { height: 25px; padding-left: 27px; border-bottom: 0; }
.sheet { flex: none; height: 135px; margin-right: 2px; padding: 2px 0 8px 4px; display: flex; border: 1px solid #404040; border-top-width: 2px; border-bottom-width: 2px; border-left-color: #e6e3dd; }
.grid { width: 798px; flex: none; table-layout: fixed; border-collapse: collapse; font-size: 11px; }
.c-nr { width: 36px; }
.c-kn { width: 132px; }
.c-p { width: 90px; }
.grid th { padding: 0; font-weight: normal; text-align: center; border: 1px solid #808080; }
.head-top { height: 14px; }
.head-top th, .head-sub th { border-top: 0; border-bottom: 0; }
.head-top .split { border-top: 0; }
.head-sub { height: 15px; }
.head-top th:nth-child(3) { border-left: 1px solid #808080; }
.grid tbody tr { height: 16px; }
.grid tbody th { background: #d4d0c8; border: 1px solid #000; box-shadow: inset 1px 1px 0 #fff, inset -1px -1px 0 #808080; }
.grid tbody tr:first-child th { background: #0a246a; color: #fff; box-shadow: none; }
.grid td { background: #fff; border: 1px solid #808080; border-left-color: #808080; }
.grid td.off { background: #e6e6e6; border-left: 0; border-right: 0; }
.vscroll { flex: none; width: 16px; display: flex; flex-direction: column; }
.vtrack { flex: 1; background: #d4d0c8; border: 1px solid; border-color: #fff #808080 #808080 #fff; }
.tabs { flex: none; height: 17px; padding-left: 2px; display: flex; }
.tab { height: 16px; padding: 2px 4px 0 5px; white-space: nowrap; border: 1px solid #000; border-top: 0; border-radius: 0 0 4px 4px; background: #d4d0c8; }
.tab.active { height: 17px; padding: 3px 3px 0 4px; margin-right: 1px; border-left-color: #fff; }
.tab.moment { width: 86px; padding-left: 4px; padding-right: 0; }
.strip { flex: none; height: 17px; margin: 3px 0 0 1px; border: 1px solid; border-color: #808080 #d4d0c8 #fff #fff; border-left: 1px solid #808080; }

/* status bar */
.statusbar { flex: none; height: 22px; padding: 2px 0 3px 2px; display: flex; gap: 3px; border-top: 1px solid #fff; }
.status-msg { flex: 1; padding-top: 1px; font-size: 10.5px; }
.cell { flex: none; border: 1px solid; border-color: #808080 #fff #fff #808080; }
.w54 { width: 54px; }
.w95 { width: 95px; }
.w57 { width: 57px; }
.w76 { width: 76px; }

/* floating FE-BGDK palette */
.palette { position: absolute; left: 22px; top: 342px; width: 214px; height: 225px; padding: 2px 3px; background: #d4d0c8; border: 1px solid; border-color: #d4d0c8 #404040 #404040 #d4d0c8; box-shadow: inset 1px 1px 0 #fff; }
.palette-title { height: 17px; display: flex; align-items: center; justify-content: space-between; padding: 0 3px 0 2px; color: #fff; font-weight: bold; font-size: 11.5px; background: linear-gradient(90deg, #0a246a, #a6caf0); }
.palette-title .winbtn { width: 11px; height: 11px; }
.palette-body { display: flex; }
.palette-controls { width: 133px; padding: 5px 0 0 7px; }
.radio { display: flex; align-items: center; height: 16px; gap: 6px; margin-left: 0; }
.radio.disabled { color: #808080; text-shadow: 1px -1px 0 #fff; }
.dot { position: relative; width: 12px; height: 12px; background: #fff; border-radius: 50%; border: 1px solid #808080; }
.disabled .dot { background: #d4d0c8; }
.dot.checked::after { content: ""; position: absolute; left: 3px; top: 3px; width: 4px; height: 4px; background: #000; border-radius: 50%; }
.sigma-row { display: flex; gap: 1px; margin-top: 32px; }
.sigma-combo { width: 105px; height: 19px; }
.spin { width: 14px; display: flex; flex-direction: column; justify-content: space-around; align-items: center; background: #d4d0c8; border: 1px solid; border-color: #fff #404040 #404040 #fff; }
.spin.tall { height: 19px; }
.spin .tri { border-width: 3px; }
.spin .tri-up { border-top: 0; }
.spin .tri-down { border-bottom: 0; }
.set-row { display: flex; gap: 2px; margin-top: 12px; }
.num-field { width: 46px; height: 19px; display: flex; background: #fff; border: 2px solid; border-color: #808080 #e6e3dd #e6e3dd #808080; }
.num { flex: 1; text-align: right; padding: 2px 2px 0 0; }
.pbtn { padding: 0; background: #d4d0c8; font: inherit; color: #000; border: 2px solid; border-color: #fff #404040 #404040 #fff; }
.setz { width: 35px; height: 19px; color: #808080; }
.alle { width: 35px; height: 19px; }
.rule { height: 2px; margin: 9px 4px 8px 0; border: 0; border-top: 1px solid #808080; border-bottom: 1px solid #fff; }
.pbtn.fe { display: block; width: 67px; height: 23px; margin-left: 23px; }
.legend { flex: none; width: 72px; height: 201px; display: flex; padding: 14px 0 0 6px; background: #fff; border-top: 1px solid #808080; }
.bar { flex: none; width: 36px; height: 170px; border-top: 2px solid #000; border-left: 1px solid #000; }
.band { height: 21px; }
.c-blue { background: #0000ff; }
.c-cyan { background: #00ffff; }
.c-green { background: #00ff00; }
.c-grey { background: #c0c0c0; }
.c-white { background: #fff; }
.c-yellow { background: #ffff00; }
.c-magenta { background: #ff00ff; }
.c-red { background: #ff0000; }
.marks { padding: 11px 0 0 2px; }
.marks b { display: block; height: 21px; line-height: 21px; font-size: 10px; white-space: nowrap; }
```
